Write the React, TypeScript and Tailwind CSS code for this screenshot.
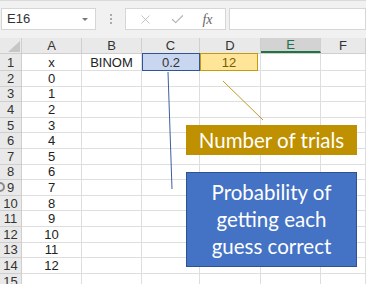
import React from "react";
import { X, Check } from "lucide-react";

const cols = [
  { name: "A", w: "w-[60px]" },
  { name: "B", w: "w-[60px]" },
  { name: "C", w: "w-[58px]" },
  { name: "D", w: "w-[61px]" },
  { name: "E", w: "w-[60px]" },
  { name: "F", w: "w-[45px]" },
];

const rows: { n: number; a: string; b: string }[] = [
  { n: 1, a: "x", b: "BINOM" },
  ...Array.from({ length: 13 }, (_, i) => ({ n: i + 2, a: String(i), b: "" })),
  { n: 15, a: "", b: "" },
];

const App: React.FC = () => {
  return (
    <div
      className="relative w-[366px] h-[284px] overflow-hidden bg-white text-[#222]"
      style={{ fontFamily: '"Liberation Sans", Arial, sans-serif' }}
    >
      {/* Formula bar */}
      <div className="h-[38px] bg-[#f1f1f1] border-t border-[#dadada] flex items-start pt-[7px]">
        <div className="ml-[1px] w-[95px] h-[22px] bg-white border border-[#d6d6d6] flex items-center px-[5px] text-[13px] text-[#333]">
          <span className="flex-1">E16</span>
          <span className="w-0 h-0 border-l-[3px] border-r-[3px] border-t-[3px] border-l-transparent border-r-transparent border-t-[#777] mr-[2px]" />
        </div>
        <div className="w-[29px] h-[22px] flex flex-col items-center justify-center gap-[2px]">
          <span className="w-[2px] h-[2px] bg-[#aaa]" />
          <span className="w-[2px] h-[2px] bg-[#aaa]" />
          <span className="w-[2px] h-[2px] bg-[#aaa]" />
        </div>
        <div className="w-[101px] h-[22px] bg-white border border-[#d6d6d6] flex items-center justify-around px-[4px] text-[#b8b8b8]">
          <X size={15} strokeWidth={1.3} />
          <Check size={15} strokeWidth={2} />
          <span
            className="italic text-[14px] text-[#666]"
            style={{ fontFamily: '"Liberation Serif", "Times New Roman", serif' }}
          >
            fx
          </span>
        </div>
        <div className="ml-[3px] flex-1 h-[22px] bg-white border border-[#d6d6d6]" />
      </div>

      {/* Column headers */}
      <div className="flex h-[16px] bg-[#e9e9e9] border-b border-[#cfcfcf] text-[13px] text-[#333]">
        <div className="relative w-[22px] border-r border-[#cfcfcf]">
          <svg className="absolute left-0 top-0" width="22" height="16">
            <polygon points="8,14 20,3 20,14" fill="#c6c6c6" />
          </svg>
        </div>
        {cols.map((c) => (
          <div
            key={c.name}
            className={`${c.w} flex items-center justify-center border-r border-[#cfcfcf] leading-none ${
              c.name === "E" ? "bg-[#d3d3d3] text-[#217346] border-b-2 border-b-[#217346]" : ""
            }`}
          >
            {c.name}
          </div>
        ))}
      </div>

      {/* Rows */}
      {rows.map((r) => (
        <div
          key={r.n}
          className={`flex text-[13px] ${r.n === 1 ? "h-[17px]" : "h-[15.6px]"}`}
        >
          <div className="w-[22px] bg-[#e9e9e9] border-r border-b border-[#cfcfcf] flex items-center justify-center text-[#333] leading-none">
            {r.n}
          </div>
          {cols.map((c) => (
            <div
              key={c.name}
              className={`${c.w} border-r border-b border-[#dedede] flex items-center justify-center leading-none`}
            >
              {c.name === "A" ? r.a : c.name === "B" ? r.b : ""}
            </div>
          ))}
        </div>
      ))}

      {/* Highlighted cells */}
      <div className="absolute left-[142px] top-[53px] w-[58px] h-[18px] bg-[#c9d6ef] border-[1.5px] border-[#2f5597] flex items-center justify-center text-[13px] text-[#333] leading-none">
        0.2
      </div>
      <div className="absolute left-[200px] top-[53px] w-[58px] h-[18px] bg-[#ffe597] border-[1.5px] border-[#c59a10] flex items-center justify-center text-[13px] text-[#7a5c00] leading-none">
        12
      </div>

      {/* Connector lines */}
      <svg className="absolute left-0 top-0" width="366" height="284">
        <line x1="223" y1="81" x2="263" y2="120" stroke="#c09a2a" strokeWidth="1" />
        <line x1="168" y1="72" x2="172" y2="189" stroke="#3f5f9f" strokeWidth="1" />
      </svg>

      {/* Callouts */}
      <div
        className="absolute left-[186px] top-[125px] w-[171px] h-[30px] bg-[#bf9000] text-white text-[20.5px] flex items-center justify-center leading-none"
        style={{ fontFamily: 'Lato, "Open Sans", sans-serif' }}
      >
        Number of trials
      </div>
      <div
        className="absolute left-[186px] top-[172px] w-[171px] h-[95px] bg-[#4472c4] border border-[#2f528f] text-white text-[20.5px] flex items-center justify-center text-center leading-[27px]"
        style={{ fontFamily: 'Lato, "Open Sans", sans-serif' }}
      >
        Probability of
        <br />
        getting each
        <br />
        guess correct
      </div>

      {/* Cursor ring at left edge */}
      <div className="absolute left-[-5px] top-[182px] w-[10px] h-[10px] rounded-full border-2 border-[#8a8a8a]" />
    </div>
  );
};

export default App;
